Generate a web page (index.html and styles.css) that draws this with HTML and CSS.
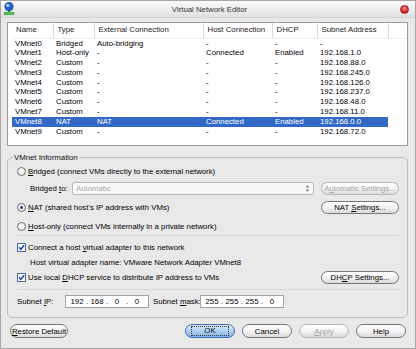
FILE: index.html
```html
<!DOCTYPE html>
<html>
<head>
<meta charset="utf-8">
<title>Virtual Network Editor</title>
<link rel="stylesheet" href="styles.css">
</head>
<body>
<div class="window">
  <div class="titlebar">
    <svg class="app-icon" width="12" height="14" viewBox="0 0 12 14">
      <rect x="1" y="10" width="10" height="3" fill="#2f9a2f"/>
      <rect x="5" y="8" width="2" height="3" fill="#2f9a2f"/>
      <rect x="1.5" y="10.5" width="9" height="2" fill="#5cc85c"/>
      <circle cx="6" cy="4.6" r="4.1" fill="#1f5fc8" stroke="#173f86" stroke-width="0.8"/>
      <circle cx="4.8" cy="3.4" r="1.7" fill="#9fd0ff"/>
    </svg>
    <div class="title">Virtual Network Editor</div>
    <div class="close"></div>
  </div>

  <div class="content">
    <div class="list">
      <table class="nets">
        <colgroup>
          <col class="c-name"><col class="c-type"><col class="c-ext"><col class="c-host"><col class="c-dhcp"><col class="c-sub"><col>
        </colgroup>
        <thead>
          <tr><th>Name</th><th>Type</th><th>External Connection</th><th>Host Connection</th><th>DHCP</th><th>Subnet Address</th><th class="fill"></th></tr>
        </thead>
        <tbody>
          <tr><td>VMnet0</td><td>Bridged</td><td>Auto-bridging</td><td>-</td><td>-</td><td>-</td><td></td></tr>
          <tr><td>VMnet1</td><td>Host-only</td><td>-</td><td>Connected</td><td>Enabled</td><td>192.168.1.0</td><td></td></tr>
          <tr><td>VMnet2</td><td>Custom</td><td>-</td><td>-</td><td>-</td><td>192.168.88.0</td><td></td></tr>
          <tr><td>VMnet3</td><td>Custom</td><td>-</td><td>-</td><td>-</td><td>192.168.245.0</td><td></td></tr>
          <tr><td>VMnet4</td><td>Custom</td><td>-</td><td>-</td><td>-</td><td>192.168.126.0</td><td></td></tr>
          <tr><td>VMnet5</td><td>Custom</td><td>-</td><td>-</td><td>-</td><td>192.168.237.0</td><td></td></tr>
          <tr><td>VMnet6</td><td>Custom</td><td>-</td><td>-</td><td>-</td><td>192.168.48.0</td><td></td></tr>
          <tr><td>VMnet7</td><td>Custom</td><td>-</td><td>-</td><td>-</td><td>192.168.11.0</td><td></td></tr>
          <tr class="sel"><td>VMnet8</td><td>NAT</td><td>NAT</td><td>Connected</td><td>Enabled</td><td>192.168.0.0</td><td class="fill"></td></tr>
          <tr><td>VMnet9</td><td>Custom</td><td>-</td><td>-</td><td>-</td><td>192.168.72.0</td><td></td></tr>
        </tbody>
      </table>
    </div>

    <fieldset class="group">
      <legend>VMnet Information</legend>

      <div class="row r-bridged">
        <span class="radio"></span><span><u>B</u>ridged (connect VMs directly to the external network)</span>
      </div>

      <div class="row r-bridgeto">
        <span class="bt-label">Bridged <u>t</u>o:</span>
        <div class="combo">
          <span>Automatic</span>
          <svg class="spin" width="5" height="9" viewBox="0 0 5 9">
            <path d="M0.5 3.5 L2.5 1 L4.5 3.5 Z" fill="#8a8a8a"/>
            <path d="M0.5 5.5 L2.5 8 L4.5 5.5 Z" fill="#8a8a8a"/>
          </svg>
        </div>
        <button class="btn dis"><span>A<u>u</u>tomatic Settings...</span></button>
      </div>

      <div class="row r-nat">
        <span class="radio on"></span><span><u>N</u>AT (shared host's IP address with VMs)</span>
        <button class="btn push-right"><span>NAT <u>S</u>ettings...</span></button>
      </div>

      <div class="row r-hostonly">
        <span class="radio"></span><span><u>H</u>ost-only (connect VMs internally in a private network)</span>
      </div>

      <div class="sep sep-1"></div>

      <div class="row r-connect">
        <svg class="check" width="9" height="9" viewBox="0 0 9 9">
          <rect x="0.5" y="0.5" width="8" height="8" fill="#fff" stroke="#4a6a9c"/>
          <path d="M2 4.3 L3.8 6.3 L7.2 2.3" fill="none" stroke="#1f45b5" stroke-width="1.6"/>
        </svg>
        <span>Connect a host <u>v</u>irtual adapter to this network</span>
      </div>

      <div class="row r-adapter">
        <span>Host virtual adapter name: VMware Network Adapter VMnet8</span>
      </div>

      <div class="row r-dhcp">
        <svg class="check" width="9" height="9" viewBox="0 0 9 9">
          <rect x="0.5" y="0.5" width="8" height="8" fill="#fff" stroke="#4a6a9c"/>
          <path d="M2 4.3 L3.8 6.3 L7.2 2.3" fill="none" stroke="#1f45b5" stroke-width="1.6"/>
        </svg>
        <span>Use local <u>D</u>HCP service to distribute IP address to VMs</span>
        <button class="btn push-right"><span>DH<u>C</u>P Settings...</span></button>
      </div>

      <div class="sep sep-2"></div>

      <div class="row r-subnet">
        <span class="ip-label">Subnet <u>I</u>P:</span>
        <div class="ipbox">
          <span class="oct">192</span><span class="dot">.</span><span class="oct">168</span><span class="dot">.</span><span class="oct">0</span><span class="dot">.</span><span class="oct">0</span>
        </div>
        <span class="mask-label">Subnet <u>m</u>ask:</span>
        <div class="ipbox">
          <span class="oct">255</span><span class="dot">.</span><span class="oct">255</span><span class="dot">.</span><span class="oct">255</span><span class="dot">.</span><span class="oct">0</span>
        </div>
      </div>
    </fieldset>

    <div class="buttons">
      <button class="btn restore"><span><u>R</u>estore Default</span></button>
      <button class="btn dlg ok"><span class="focus">OK</span></button>
      <button class="btn dlg"><span>Cancel</span></button>
      <button class="btn dlg dis"><span><u>A</u>pply</span></button>
      <button class="btn dlg"><span>Help</span></button>
    </div>
  </div>
</div>
</body>
</html>
```

FILE: styles.css
```css
* { box-sizing: border-box; }

html, body {
  margin: 0;
  padding: 0;
}

body {
  width: 416px;
  height: 349px;
  overflow: hidden;
  font-family: "Liberation Sans", Arial, sans-serif;
  font-size: 7.8px;
  color: #000;
  background: #ebebeb;
}

.window {
  width: 416px;
  height: 349px;
  border: 1px solid #a6a6a6;
  background: repeating-conic-gradient(#ededed 0 25%, #e4e4e4 0 50%) 0 0 / 2px 2px;
  display: flex;
  flex-direction: column;
}

/* ---------- title bar ---------- */
.titlebar {
  height: 17px;
  flex: none;
  display: flex;
  align-items: center;
  padding: 0 6px 0 2px;
  background: linear-gradient(#fafafa, #ebebeb 60%, #e0e0e0);
  border-bottom: 1px solid #d4d4d4;
}

.app-icon { flex: none; }

.title {
  flex: 1;
  text-align: center;
  color: #333;
  padding-left: 4px;
}

.close {
  flex: none;
  width: 9px;
  height: 9px;
  border-radius: 50%;
  border: 1px solid #8a1c1c;
  background: radial-gradient(circle at 50% 30%, #ff9a9a 0, #e23a3a 45%, #b31616 100%);
}

/* ---------- content ---------- */
.content {
  flex: 1;
  display: flex;
  flex-direction: column;
  padding: 4px 7px 0 6px;
}

.list {
  height: 124px;
  flex: none;
  border: 1px solid #9c9c9c;
  background: #fff;
  padding-left: 4px;
  overflow: hidden;
}

.nets {
  width: 100%;
  border-collapse: collapse;
  table-layout: fixed;
}

.c-name { width: 41px; }
.c-type { width: 41px; }
.c-ext { width: 109px; }
.c-host { width: 69px; }
.c-dhcp { width: 45px; }
.c-sub { width: 71px; }

.nets th {
  height: 15px;
  padding: 0 0 0 4px;
  font-weight: normal;
  text-align: left;
  color: #222;
  line-height: 14px;
  white-space: nowrap;
  border-right: 1px solid #dadada;
  border-bottom: 1px solid #efefef;
  overflow: hidden;
}

.nets th.fill { border-right: none; }

.nets td {
  height: 9.8px;
  line-height: 9.8px;
  padding: 0 0 0 3px;
  white-space: nowrap;
  overflow: hidden;
}

.nets tr.sel td {
  background: #3169c4;
  color: #fff;
}

.nets tr.sel td.fill { background: #fff; }

/* ---------- group box ---------- */
.group {
  margin: 6px 0 0;
  padding: 2px 8px 9px 9px;
  border: 1px solid #bfbfbf;
  border-radius: 5px;
  min-width: 0;
  flex: none;
}

.group legend {
  margin-left: -4px;
  padding: 0 1px;
  height: 11px;
  line-height: 11px;
  color: #111;
}

.row {
  display: flex;
  align-items: center;
  white-space: nowrap;
}

.r-bridged { height: 12px; }
.r-bridgeto { height: 13px; margin-top: 5px; }
.r-nat { height: 13px; margin-top: 6px; }
.r-hostonly { height: 12px; margin-top: 6px; }
.r-connect { height: 12px; margin-top: 5px; }
.r-adapter { height: 12px; margin-top: 3px; padding-left: 13px; }
.r-dhcp { height: 13px; margin-top: 3px; }
.r-subnet { height: 13px; margin-top: 5px; }

.sep {
  height: 1px;
  background: #d6d6d6;
  flex: none;
}
.sep-1 { margin-top: 3px; }
.sep-2 { margin-top: 5px; }

.radio {
  flex: none;
  width: 9px;
  height: 9px;
  margin-right: 2px;
  border-radius: 50%;
  border: 1px solid #6f6f6f;
  background: radial-gradient(circle at 40% 35%, #ffffff, #e2e2e2);
  position: relative;
}

.radio.on::after {
  content: "";
  position: absolute;
  left: 2px;
  top: 2px;
  width: 3px;
  height: 3px;
  border-radius: 50%;
  background: #22388a;
}

.check {
  flex: none;
  margin-right: 2px;
}

.bt-label {
  margin-left: 13px;
  width: 42px;
  flex: none;
}

.combo {
  flex: 1;
  height: 13px;
  margin-right: 7px;
  border: 1px solid #b6b6b6;
  border-radius: 2px;
  background: #f8f8f8;
  color: #ababab;
  display: flex;
  align-items: center;
  padding-left: 3px;
}

.combo .spin {
  margin-left: auto;
  margin-right: 3px;
}

.btn {
  flex: none;
  width: 78px;
  height: 13px;
  padding: 0;
  font: inherit;
  color: #000;
  border: 1px solid #777;
  border-radius: 7px;
  background: linear-gradient(#ffffff, #f1f1f1 55%, #dadada);
  display: flex;
  align-items: center;
  justify-content: center;
  white-space: nowrap;
}

.btn.dis {
  color: #a5a5a5;
  border-color: #b4b4b4;
}

.push-right { margin-left: auto; }

.ip-label { width: 48px; flex: none; }
.mask-label { width: 47px; flex: none; margin-left: 4px; }

.ipbox {
  flex: none;
  width: 84px;
  height: 13px;
  border: 1px solid #a3a3a3;
  background: #fff;
  display: flex;
  align-items: center;
  padding-left: 3px;
}

.oct {
  width: 16px;
  text-align: center;
}

.dot {
  width: 4px;
  text-align: center;
}

/* ---------- dialog buttons ---------- */
.buttons {
  display: flex;
  margin-top: 6px;
  padding-left: 3px;
}

.buttons .btn { height: 14px; }

.restore { width: 58px; }

.dlg { width: 50px; margin-left: 7px; }
.ok {
  margin-left: 117px;
  border-color: #3f6fb5;
  background: linear-gradient(#dcecfd, #b3d3f3 45%, #80b2e8);
}

.ok .focus {
  border: 1px dotted #333;
  padding: 0 12px;
  line-height: 8px;
}
```
